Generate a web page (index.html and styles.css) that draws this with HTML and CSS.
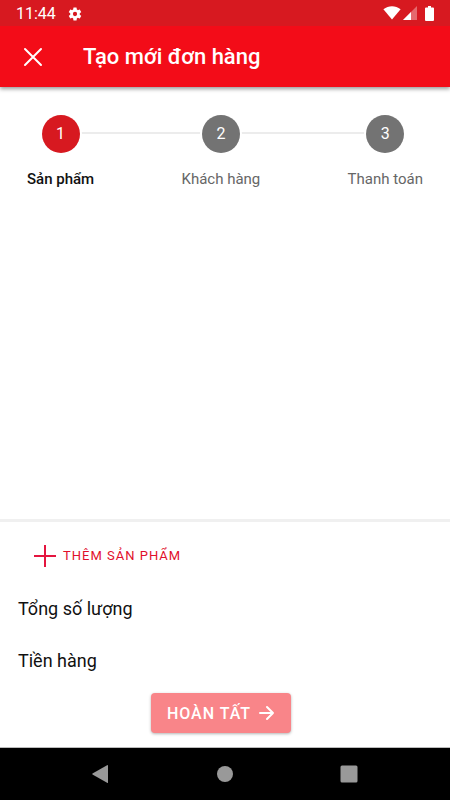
FILE: index.html
```html
<!DOCTYPE html>
<html lang="vi">
<head>
<meta charset="utf-8">
<meta name="viewport" content="width=device-width, initial-scale=1">
<title>Tạo mới đơn hàng</title>
<link rel="stylesheet" href="styles.css">
</head>
<body>
<div class="status">
  <span class="clock">11:44</span>
  <svg class="gear" viewBox="0 0 24 24" width="16" height="16" aria-hidden="true"><path fill="#fff" d="M19.14 12.94c.04-.3.06-.61.06-.94s-.02-.64-.07-.94l2.03-1.58a.49.49 0 0 0 .12-.61l-1.92-3.32a.49.49 0 0 0-.59-.22l-2.39.96a7 7 0 0 0-1.62-.94l-.36-2.54a.48.48 0 0 0-.48-.41h-3.84a.47.47 0 0 0-.47.41l-.36 2.54a7.300 7.300 0 0 0-1.620.94l-2.390-.96a.48.48 0 0 0-.59.22L2.740 8.870a.47.47 0 0 0 .12.610l2.030 1.580a6 6 0 0 0 0 1.880l-2.030 1.580a.49.49 0 0 0-.12.610l1.920 3.320c.12.22.37.29.59.22l2.390-.96c.5.380 1.030.7 1.620.94l.36 2.540c.05.240.24.41.48.41h3.840c.24 0 .44-.17.470-.41l.36-2.540a7 7 0 0 0 1.620-.94l2.390.96c.22.080.47 0 .59-.22l1.920-3.320a.47.47 0 0 0-.12-.610zM12 15.200a3.200 3.200 0 1 1 0-6.400 3.200 3.200 0 0 1 0 6.400z"/></svg>
  <span class="signals">
    <svg viewBox="0 0 18 14" width="18" height="14" aria-hidden="true"><path fill="#fff" d="M9 13.500.4 3.200C3 1.200 6 .2 9 .2s6 1 8.600 3z"/></svg>
    <svg viewBox="0 0 14 14" width="14" height="14" aria-hidden="true"><path fill="#fff" opacity=".35" d="M14 0v14H0z"/><path fill="#fff" d="M8 6v8H0z"/></svg>
    <svg viewBox="0 0 9 15" width="9" height="15" aria-hidden="true"><path fill="#fff" d="M3 0h3v1.500h2q1 0 1 1V14q0 1-1 1H1q-1 0-1-1V2.500q0-1 1-1h2z"/></svg>
  </span>
</div>
<header class="bar">
  <button class="close" type="button" aria-label="Đóng">
    <svg viewBox="0 0 20 20" width="20" height="20" aria-hidden="true"><path d="M2 2l16 16M18 2 2 18" stroke="#fff" stroke-width="2" stroke-linecap="round"/></svg>
  </button>
  <h1>Tạo mới đơn hàng</h1>
</header>
<main>
  <ol class="steps">
    <li class="step active" aria-current="step"><span class="dot">1</span><span class="name">Sản phẩm</span></li>
    <li class="link" aria-hidden="true"></li>
    <li class="step"><span class="dot">2</span><span class="name">Khách hàng</span></li>
    <li class="link" aria-hidden="true"></li>
    <li class="step"><span class="dot">3</span><span class="name">Thanh toán</span></li>
  </ol>
</main>
<section class="summary">
  <button class="add" type="button">
    <svg viewBox="0 0 22 22" width="22" height="22" aria-hidden="true"><path d="M11 0v22M0 11h22" stroke="#e4153f" stroke-width="2"/></svg>
    THÊM SẢN PHẨM
  </button>
  <p>Tổng số lượng</p>
  <p>Tiền hàng</p>
  <button class="done" type="button">
    HOÀN TẤT
    <svg viewBox="0 0 16 16" width="16" height="16" aria-hidden="true"><path d="M1 8h13M8 2l6 6-6 6" fill="none" stroke="#fff" stroke-width="2" stroke-linecap="round" stroke-linejoin="round"/></svg>
  </button>
</section>
<nav class="nav">
  <button type="button" aria-label="Quay lại"><svg viewBox="0 0 18 18" width="18" height="18" aria-hidden="true"><path fill="#999" d="M16 .5v17q0 .5-.5.5L.5 9.500q-.5-.5 0-1L15.500 0q.5 0 .5.500z"/></svg></button>
  <button type="button" aria-label="Trang chủ"><svg viewBox="0 0 18 18" width="18" height="18" aria-hidden="true"><circle cx="9" cy="9" r="8" fill="#999"/></svg></button>
  <button type="button" aria-label="Gần đây"><svg viewBox="0 0 18 18" width="18" height="18" aria-hidden="true"><rect x=".5" y=".5" width="17" height="17" rx="1.500" fill="#999"/></svg></button>
</nav>
</body>
</html>
```
FILE: styles.css
```css
* { box-sizing: border-box; }

body {
  margin: 0;
  min-height: 100vh;
  display: flex;
  flex-direction: column;
  background: #fff;
  color: #111;
  font-family: Roboto, "Noto Sans", sans-serif;
}

button {
  border: 0;
  padding: 0;
  background: none;
  font-family: inherit;
  cursor: pointer;
}

svg { display: block; flex: none; }

.status {
  display: flex;
  align-items: center;
  gap: 11px;
  height: 26px;
  padding: 2px 16px 0;
  background: #d71920;
  color: #fff;
}

.clock { font-size: 16px; line-height: 24px; }

.signals {
  display: flex;
  align-items: center;
  gap: 2px;
  margin: -2px 0 0 auto;
}

.signals svg:last-child { margin-left: 6px; }

.bar {
  display: flex;
  align-items: center;
  gap: 40px;
  height: 61px;
  padding: 0 23px;
  background: #f30c18;
  color: #fff;
  box-shadow: 0 2px 4px rgba(0, 0, 0, 0.4);
  clip-path: inset(0 0 -8px);
}

.bar h1 {
  margin: 0;
  font-size: 22px;
  line-height: 28px;
  font-weight: 500;
}

main { flex: 1; padding: 28px 27px; }

.steps {
  display: flex;
  margin: 0;
  padding: 0;
  list-style: none;
}

.step {
  display: flex;
  flex-direction: column;
  align-items: center;
  gap: 16px;
  color: #666;
}

.dot {
  z-index: 1;
  width: 38px;
  height: 38px;
  border-radius: 50%;
  background: #737373;
  box-shadow: 0 0 0 2px #fff;
  color: #fff;
  font-size: 16px;
  line-height: 38px;
  text-align: center;
}

.name { font-size: 15px; line-height: 20px; }

.active { color: #111; }
.active .name { font-weight: 500; }
.active .dot { background: #d71920; }

.link {
  flex: 1;
  height: 2px;
  margin: 17px -20px 0;
  background: #ececec;
}

.summary {
  display: flex;
  flex-direction: column;
  padding: 23px 18px 14px;
  border-top: 3px solid #f0f0f0;
  border-bottom: 1px solid #bbb;
}

.add {
  display: flex;
  align-items: center;
  align-self: flex-start;
  gap: 7px;
  margin: 0 0 22px 16px;
  color: #e10f2b;
  font-size: 13px;
  line-height: 22px;
  letter-spacing: 1px;
}

.summary p {
  margin: 0 0 12px;
  font-size: 18px;
  line-height: 40px;
}

.done {
  display: flex;
  align-items: center;
  align-self: center;
  gap: 8px;
  height: 40px;
  margin-right: 8px;
  padding: 0 16px;
  border-radius: 4px;
  background: #f98589;
  box-shadow: 0 1px 3px rgba(0, 0, 0, 0.3);
  color: #fff;
  font-size: 16px;
  font-weight: 500;
  letter-spacing: 1px;
}

.nav {
  display: flex;
  align-items: center;
  justify-content: space-between;
  height: 52px;
  padding: 0 92px;
  background: #000;
}
```
